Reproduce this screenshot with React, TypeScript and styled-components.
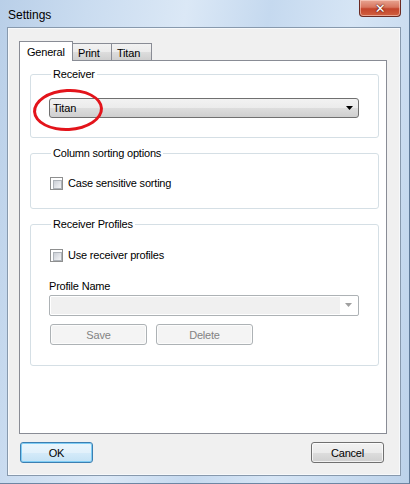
import React from "react";
import styled, { createGlobalStyle } from "styled-components";

const GlobalStyle = createGlobalStyle`
  html, body {
    margin: 0;
    padding: 0;
    background: #ffffff;
  }
  * {
    box-sizing: border-box;
  }
`;

const Window = styled.div`
  width: 410px;
  height: 484px;
  display: flex;
  flex-direction: column;
  font-family: "Liberation Sans", Arial, sans-serif;
  font-size: 11px;
  letter-spacing: -0.2px;
  color: #000;
  background: linear-gradient(
    100deg,
    #b9cfe8 0%,
    #cadcf0 18%,
    #dbe8f6 38%,
    #c5d9ef 55%,
    #d6e5f5 72%,
    #bcd2ea 100%
  );
  border-right: 1px solid #5f7a98;
  border-bottom: 1px solid #6d86a3;
  overflow: hidden;
`;

const TitleBar = styled.div`
  height: 27px;
  display: flex;
  justify-content: space-between;
  align-items: flex-start;
  padding-left: 8px;
  flex-shrink: 0;
`;

const TitleText = styled.span`
  font-size: 12px;
  line-height: 12px;
  letter-spacing: 0;
  margin-top: 9px;
  color: #000;
`;

const CloseButton = styled.div`
  width: 42px;
  height: 17px;
  margin-right: 8px;
  border: 1px solid #6b2a22;
  border-top: none;
  border-radius: 0 0 4px 4px;
  background: linear-gradient(
    to bottom,
    #e8a592 0%,
    #d8765f 45%,
    #c4452c 55%,
    #d0603f 100%
  );
  box-shadow: inset 0 0 0 1px rgba(255, 220, 210, 0.55);
  display: flex;
  align-items: center;
  justify-content: center;
  color: #fff;
  font-family: "DejaVu Sans", sans-serif;
  font-weight: bold;
  font-size: 13px;
  line-height: 1;
  text-shadow: 0 0 1px #5a1a10, 0 0 2px #5a1a10;
`;

const Client = styled.div`
  margin: 0 8px 0 7px;
  height: 449px;
  background: #f0f0f0;
  border: 1px solid #8799ad;
  box-shadow: inset 0 0 0 1px #f7f9fb;
  padding: 13px 14px 0 11px;
  display: flex;
  flex-direction: column;
`;

const TabStrip = styled.div`
  display: flex;
  align-items: flex-end;
  height: 20px;
  position: relative;
  z-index: 1;
`;

const Tab = styled.div<{ $active?: boolean; $width: number }>`
  width: ${(p) => p.$width}px;
  height: ${(p) => (p.$active ? 20 : 18)}px;
  border: 1px solid #898c95;
  border-bottom: ${(p) => (p.$active ? "none" : "1px solid #898c95")};
  margin-left: ${(p) => (p.$active ? 0 : -1)}px;
  background: ${(p) =>
    p.$active
      ? "#ffffff"
      : "linear-gradient(to bottom, #f2f2f2 0%, #ebebeb 50%, #dddddd 51%, #cfcfcf 100%)"};
  padding: ${(p) => (p.$active ? "4px 0 0 7px" : "3px 0 0 5px")};
  line-height: 13px;
  &:first-child {
    margin-left: 0;
  }
`;

const Panel = styled.div`
  width: 368px;
  height: 374px;
  margin-top: -1px;
  background: #ffffff;
  border: 1px solid #898c95;
  padding: 7px 8px 0 10px;
  display: flex;
  flex-direction: column;
  gap: 9px;
`;

const Group = styled.fieldset<{ $pt: number; $pb: number }>`
  position: relative;
  margin: 0;
  min-width: 0;
  width: 349px;
  border: 1px solid #d5dfe5;
  border-radius: 3px;
  padding: ${(p) => p.$pt}px 18px ${(p) => p.$pb}px 18px;
  display: flex;
  flex-direction: column;
`;

const Legend = styled.legend`
  font-size: 11px;
  line-height: 13px;
  padding: 0 2px;
  margin-left: 2px;
  color: #000;
`;

const Combo = styled.div<{ $disabled?: boolean }>`
  width: 310px;
  height: ${(p) => (p.$disabled ? 21 : 20)}px;
  border: 1px solid ${(p) => (p.$disabled ? "#adb2b5" : "#707070")};
  border-radius: ${(p) => (p.$disabled ? 2 : 3)}px;
  background: ${(p) =>
    p.$disabled
      ? "#ffffff"
      : "linear-gradient(to bottom, #f2f2f2 0%, #ebebeb 50%, #dddddd 51%, #cfcfcf 100%)"};
  display: flex;
  align-items: stretch;
  overflow: hidden;
`;

const ComboText = styled.div<{ $disabled?: boolean }>`
  flex: 1;
  padding-left: 3px;
  line-height: 18px;
  margin: ${(p) => (p.$disabled ? "1px 0 1px 1px" : "0")};
  background: ${(p) => (p.$disabled ? "#f0f0f0" : "transparent")};
`;

const ComboArrow = styled.div<{ $disabled?: boolean }>`
  width: 18px;
  display: flex;
  align-items: center;
  justify-content: center;
  padding-left: ${(p) => (p.$disabled ? 0 : 2)}px;
`;

const Annotation = styled.div`
  position: absolute;
  left: 2px;
  top: 8px;
  width: 70px;
  height: 42px;
  border: 3px solid #e3141b;
  border-radius: 50%;
  transform: rotate(-3deg);
  pointer-events: none;
`;

const CheckRow = styled.label`
  display: flex;
  align-items: center;
  gap: 5px;
  height: 13px;
  margin-left: 1px;
  line-height: 13px;
`;

const CheckBox = styled.span`
  width: 13px;
  height: 13px;
  border: 1px solid #8e8f8f;
  background: #ffffff;
  padding: 2px;
  display: block;
  &::after {
    content: "";
    display: block;
    width: 7px;
    height: 7px;
    border: 1px solid #aeb3b9;
    background: linear-gradient(135deg, #cbcfd5 0%, #e4e6ea 60%, #f4f5f6 100%);
  }
`;

const FieldLabel = styled.div`
  line-height: 13px;
  margin: 18px 0 2px 0;
`;

const ButtonRow = styled.div`
  display: flex;
  gap: 9px;
  margin-top: 8px;
  margin-left: 1px;
`;

const Button = styled.button<{ $disabled?: boolean; $focused?: boolean; $w: number }>`
  width: ${(p) => p.$w}px;
  height: 21px;
  font-family: "Liberation Sans", Arial, sans-serif;
  font-size: 11px;
  letter-spacing: inherit;
  padding: 0;
  border-radius: 3px;
  color: ${(p) => (p.$disabled ? "#838383" : "#000")};
  border: 1px solid
    ${(p) => (p.$disabled ? "#adb2b5" : p.$focused ? "#3c7fb1" : "#707070")};
  background: ${(p) =>
    p.$disabled
      ? "#f4f4f4"
      : p.$focused
      ? "linear-gradient(to bottom, #eaf6fd 0%, #e2f1fb 50%, #d5ebf9 51%, #c4e2f5 100%)"
      : "linear-gradient(to bottom, #f2f2f2 0%, #ebebeb 50%, #dddddd 51%, #cfcfcf 100%)"};
  box-shadow: ${(p) =>
    p.$focused ? "inset 0 0 0 1px #7fcdf5" : "inset 0 0 0 1px rgba(255,255,255,0.7)"};
`;

const Footer = styled.div`
  display: flex;
  justify-content: space-between;
  margin-top: 8px;
  padding-left: 1px;
  padding-right: 2px;
`;

const Triangle = ({ color }: { color: string }) => (
  <svg width="8" height="5" viewBox="0 0 8 5">
    <path d="M0 0 H7 L3.5 4 Z" fill={color} />
  </svg>
);

export default function App() {
  return (
    <>
      <GlobalStyle />
      <Window>
        <TitleBar>
          <TitleText>Settings</TitleText>
          <CloseButton>✕</CloseButton>
        </TitleBar>
        <Client>
          <TabStrip>
            <Tab $active $width={54}>General</Tab>
            <Tab $width={40}>Print</Tab>
            <Tab $width={41}>Titan</Tab>
          </TabStrip>
          <Panel>
            <Group $pt={17} $pb={19}>
              <Legend>Receiver</Legend>
              <Annotation />
              <Combo>
                <ComboText>Titan</ComboText>
                <ComboArrow>
                  <Triangle color="#000" />
                </ComboArrow>
              </Combo>
            </Group>
            <Group $pt={17} $pb={18}>
              <Legend>Column sorting options</Legend>
              <CheckRow>
                <CheckBox />
                Case sensitive sorting
              </CheckRow>
            </Group>
            <Group $pt={18} $pb={20}>
              <Legend>Receiver Profiles</Legend>
              <CheckRow>
                <CheckBox />
                Use receiver profiles
              </CheckRow>
              <FieldLabel>Profile Name</FieldLabel>
              <Combo $disabled>
                <ComboText $disabled />
                <ComboArrow $disabled>
                  <Triangle color="#a0a0a0" />
                </ComboArrow>
              </Combo>
              <ButtonRow>
                <Button $disabled $w={97}>Save</Button>
                <Button $disabled $w={97}>Delete</Button>
              </ButtonRow>
            </Group>
          </Panel>
          <Footer>
            <Button $focused $w={73}>OK</Button>
            <Button $w={73}>Cancel</Button>
          </Footer>
        </Client>
      </Window>
    </>
  );
}
